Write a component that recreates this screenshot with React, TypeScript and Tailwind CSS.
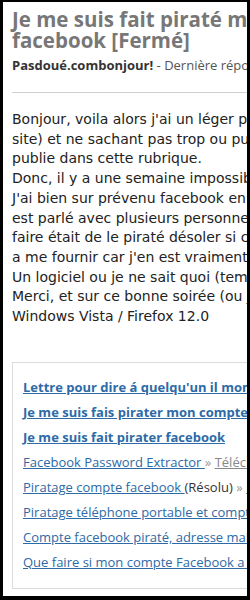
const bodyLines = [
  "Bonjour, voila alors j'ai un léger problème avec mon compte facebook (le",
  "site) et ne sachant pas trop ou publier mon message, je le",
  "publie dans cette rubrique.",
  "Donc, il y a une semaine impossible de me connecter à mon compte.",
  "J'ai bien sur prévenu facebook en leur envoyant un mail et j'en",
  "est parlé avec plusieurs personnes mais la seul chose qu'ils ont pu",
  "faire était de le piraté désoler si cela ne se fait pas mais j'ai",
  "a me fournir car j'en est vraiment besoin.",
  "Un logiciel ou je ne sait quoi (temporaire bien sur).",
  "Merci, et sur ce bonne soirée (ou journée).",
  "Windows Vista / Firefox 12.0",
];

type Related = {
  title: string;
  bold?: boolean;
  status?: string;
  tail?: string;
};

const related: Related[] = [
  { title: "Lettre pour dire á quelqu'un il mon compte facebook", bold: true },
  { title: "Je me suis fais pirater mon compte facebook", bold: true },
  { title: "Je me suis fait pirater facebook", bold: true },
  { title: "Facebook Password Extractor ", tail: "Télécharger" },
  { title: "Piratage compte facebook ", status: "(Résolu)", tail: "Facebook" },
  { title: "Piratage téléphone portable et compte facebook" },
  { title: "Compte facebook piraté, adresse mail changée" },
  { title: "Que faire si mon compte Facebook a été piraté" },
];

export default function App() {
  return (
    <div className="w-[250px] h-[600px] overflow-hidden bg-black">
      <div className="h-[594px] ml-[3px] mt-[2px] w-[244px] bg-white overflow-hidden">
        <div className="w-[600px] pl-[9px]">
          <h1
            className="font-bold text-[#777] text-[20.5px] leading-[20.5px] pt-[7px] w-[370px]"
            style={{ fontFamily: '"Open Sans", sans-serif' }}
          >
            Je me suis fait piraté mon compte facebook [Fermé]
          </h1>
          <div
            className="mt-[6px] text-[13px] leading-[18px] whitespace-nowrap text-[#555]"
            style={{ fontFamily: '"Open Sans", sans-serif' }}
          >
            <span className="font-bold text-[#333]">Pasdoué.com</span>
            <span className="font-bold text-[#333]">bonjour!</span> - Dernière réponse le 12 mai 2012
          </div>
          <div className="mt-[18px] h-px w-[500px] bg-[#cfcfcf]" />
          <div
            className="mt-[17px] text-[14px] leading-[19.7px] text-[#222] whitespace-nowrap"
            style={{ fontFamily: '"DejaVu Sans", Verdana, sans-serif' }}
          >
            {bodyLines.map((l, i) => (
              <div key={i}>{l}</div>
            ))}
          </div>
          <div
            className="mt-[35px] border border-[#dcdcdc] w-[500px] h-[227px] pt-[12px] pl-[10px]"
            style={{ fontFamily: '"Open Sans", sans-serif' }}
          >
            {related.map((r, i) => (
              <div key={i} className="h-[25px] text-[13px] leading-[25px] whitespace-nowrap">
                <a
                  href="#"
                  className={`underline text-[#2d6aa6] ${r.bold ? "font-bold" : ""}`}
                >
                  {r.title}
                </a>
                {r.status && <span className="text-[#333]">{r.status}</span>}
                {r.tail && (
                  <>
                    <span className="text-[#999]"> » </span>
                    <a href="#" className="underline text-[#888]">
                      {r.tail}
                    </a>
                  </>
                )}
              </div>
            ))}
          </div>
        </div>
      </div>
    </div>
  );
}
